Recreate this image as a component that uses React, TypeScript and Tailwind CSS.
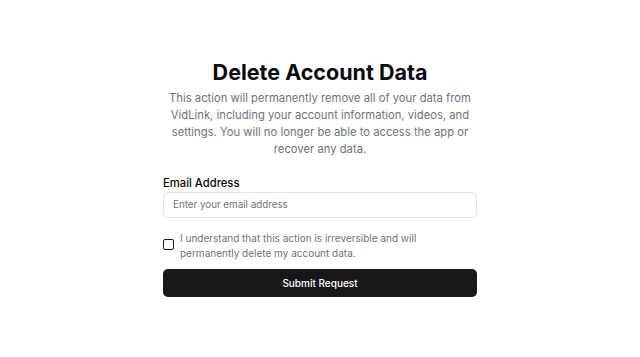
import React from "react";

export default function App() {
  return (
    <div
      className="w-[640px] h-[357px] bg-white flex justify-center"
      style={{ fontFamily: "Inter, 'Noto Sans', sans-serif" }}
    >
      <div className="w-[314px] pt-[58px] flex flex-col">
        <h1 className="text-[21.5px] leading-[28px] font-bold text-[#09090b] text-center">
          Delete Account Data
        </h1>
        <p className="mt-[3.5px] text-[11.25px] leading-[17.3px] text-[#71717a] text-center">
          This action will permanently remove all of your data from VidLink,
          including your account information, videos, and settings. You will no
          longer be able to access the app or recover any data.
        </p>
        <label className="mt-[17px] text-[11.25px] leading-[14px] font-medium text-[#09090b]">
          Email Address
        </label>
        <input
          type="email"
          placeholder="Enter your email address"
          className="mt-[2px] h-[26px] w-full rounded-[5px] border border-[#e4e4e7] px-[9px] text-[9.8px] text-[#09090b] placeholder:text-[#71717a] outline-none"
        />
        <div className="mt-[13px] flex items-start gap-[6px]">
          <div className="mt-[8px] w-[11px] h-[11px] shrink-0 rounded-[2px] border border-[#18181b] bg-white" />
          <span className="text-[10px] leading-[15px] text-[#71717a]">
            I understand that this action is irreversible and will permanently
            delete my account data.
          </span>
        </div>
        <button className="mt-[8.5px] h-[28px] w-full rounded-[5px] bg-[#18181b] text-white text-[10px] font-medium">
          Submit Request
        </button>
      </div>
    </div>
  );
}
